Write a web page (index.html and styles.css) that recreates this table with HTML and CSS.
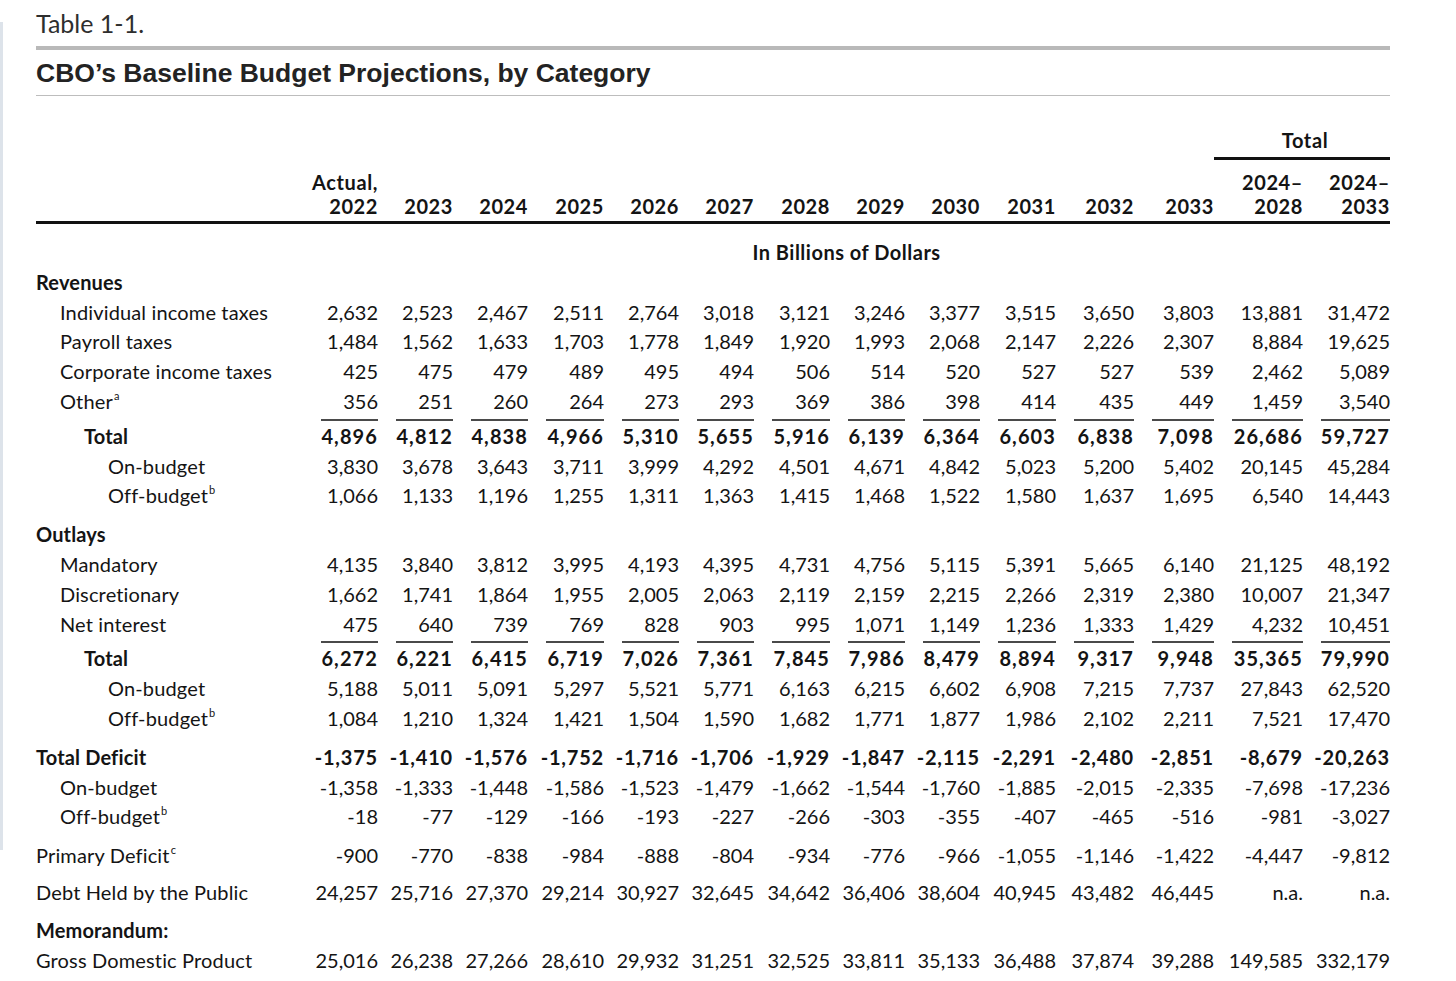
FILE: index.html
```html
<!DOCTYPE html>
<html lang="en">
<head>
<meta charset="utf-8">
<title>CBO's Baseline Budget Projections, by Category</title>
<link rel="stylesheet" href="styles.css">
</head>
<body>
<div class="frame">
  <div class="edge"></div>
  <main class="page">
    <div class="caption">Table 1-1.</div>
    <div class="rule-thick"></div>
    <h1 class="title">CBO’s Baseline Budget Projections, by Category</h1>
    <div class="rule-thin"></div>

    <table class="budget">
      <colgroup>
        <col class="c-label">
        <col class="c-y"><col class="c-y"><col class="c-y"><col class="c-y5"><col class="c-y">
        <col class="c-y"><col class="c-y5"><col class="c-y"><col class="c-y"><col class="c-y5">
        <col class="c-32"><col class="c-33"><col class="c-t1"><col class="c-t2">
      </colgroup>
      <thead>
        <tr class="group">
          <th colspan="13"></th>
          <th colspan="2" class="group-total">Total</th>
        </tr>
        <tr class="years">
          <th></th>
          <th>Actual,<br>2022</th>
          <th>2023</th><th>2024</th><th>2025</th><th>2026</th><th>2027</th><th>2028</th>
          <th>2029</th><th>2030</th><th>2031</th><th>2032</th><th>2033</th>
          <th>2024–<br>2028</th><th>2024–<br>2033</th>
        </tr>
      </thead>
      <tbody>
        <tr class="units"><td></td><td colspan="14">In Billions of Dollars</td></tr>

        <tr class="section"><td colspan="15">Revenues</td></tr>
        <tr><td class="l1">Individual income taxes</td><td>2,632</td><td>2,523</td><td>2,467</td><td>2,511</td><td>2,764</td><td>3,018</td><td>3,121</td><td>3,246</td><td>3,377</td><td>3,515</td><td>3,650</td><td>3,803</td><td>13,881</td><td>31,472</td></tr>
        <tr><td class="l1">Payroll taxes</td><td>1,484</td><td>1,562</td><td>1,633</td><td>1,703</td><td>1,778</td><td>1,849</td><td>1,920</td><td>1,993</td><td>2,068</td><td>2,147</td><td>2,226</td><td>2,307</td><td>8,884</td><td>19,625</td></tr>
        <tr><td class="l1">Corporate income taxes</td><td>425</td><td>475</td><td>479</td><td>489</td><td>495</td><td>494</td><td>506</td><td>514</td><td>520</td><td>527</td><td>527</td><td>539</td><td>2,462</td><td>5,089</td></tr>
        <tr><td class="l1">Other<sup>a</sup></td><td>356</td><td>251</td><td>260</td><td>264</td><td>273</td><td>293</td><td>369</td><td>386</td><td>398</td><td>414</td><td>435</td><td>449</td><td>1,459</td><td>3,540</td></tr>
        <tr class="total"><td class="l2">Total</td><td>4,896</td><td>4,812</td><td>4,838</td><td>4,966</td><td>5,310</td><td>5,655</td><td>5,916</td><td>6,139</td><td>6,364</td><td>6,603</td><td>6,838</td><td>7,098</td><td>26,686</td><td>59,727</td></tr>
        <tr><td class="l3">On-budget</td><td>3,830</td><td>3,678</td><td>3,643</td><td>3,711</td><td>3,999</td><td>4,292</td><td>4,501</td><td>4,671</td><td>4,842</td><td>5,023</td><td>5,200</td><td>5,402</td><td>20,145</td><td>45,284</td></tr>
        <tr><td class="l3">Off-budget<sup>b</sup></td><td>1,066</td><td>1,133</td><td>1,196</td><td>1,255</td><td>1,311</td><td>1,363</td><td>1,415</td><td>1,468</td><td>1,522</td><td>1,580</td><td>1,637</td><td>1,695</td><td>6,540</td><td>14,443</td></tr>

        <tr class="section gap"><td colspan="15">Outlays</td></tr>
        <tr><td class="l1">Mandatory</td><td>4,135</td><td>3,840</td><td>3,812</td><td>3,995</td><td>4,193</td><td>4,395</td><td>4,731</td><td>4,756</td><td>5,115</td><td>5,391</td><td>5,665</td><td>6,140</td><td>21,125</td><td>48,192</td></tr>
        <tr><td class="l1">Discretionary</td><td>1,662</td><td>1,741</td><td>1,864</td><td>1,955</td><td>2,005</td><td>2,063</td><td>2,119</td><td>2,159</td><td>2,215</td><td>2,266</td><td>2,319</td><td>2,380</td><td>10,007</td><td>21,347</td></tr>
        <tr><td class="l1">Net interest</td><td>475</td><td>640</td><td>739</td><td>769</td><td>828</td><td>903</td><td>995</td><td>1,071</td><td>1,149</td><td>1,236</td><td>1,333</td><td>1,429</td><td>4,232</td><td>10,451</td></tr>
        <tr class="total"><td class="l2">Total</td><td>6,272</td><td>6,221</td><td>6,415</td><td>6,719</td><td>7,026</td><td>7,361</td><td>7,845</td><td>7,986</td><td>8,479</td><td>8,894</td><td>9,317</td><td>9,948</td><td>35,365</td><td>79,990</td></tr>
        <tr><td class="l3">On-budget</td><td>5,188</td><td>5,011</td><td>5,091</td><td>5,297</td><td>5,521</td><td>5,771</td><td>6,163</td><td>6,215</td><td>6,602</td><td>6,908</td><td>7,215</td><td>7,737</td><td>27,843</td><td>62,520</td></tr>
        <tr><td class="l3">Off-budget<sup>b</sup></td><td>1,084</td><td>1,210</td><td>1,324</td><td>1,421</td><td>1,504</td><td>1,590</td><td>1,682</td><td>1,771</td><td>1,877</td><td>1,986</td><td>2,102</td><td>2,211</td><td>7,521</td><td>17,470</td></tr>

        <tr class="bold gap"><td>Total Deficit</td><td>-1,375</td><td>-1,410</td><td>-1,576</td><td>-1,752</td><td>-1,716</td><td>-1,706</td><td>-1,929</td><td>-1,847</td><td>-2,115</td><td>-2,291</td><td>-2,480</td><td>-2,851</td><td>-8,679</td><td>-20,263</td></tr>
        <tr><td class="l1">On-budget</td><td>-1,358</td><td>-1,333</td><td>-1,448</td><td>-1,586</td><td>-1,523</td><td>-1,479</td><td>-1,662</td><td>-1,544</td><td>-1,760</td><td>-1,885</td><td>-2,015</td><td>-2,335</td><td>-7,698</td><td>-17,236</td></tr>
        <tr><td class="l1">Off-budget<sup>b</sup></td><td>-18</td><td>-77</td><td>-129</td><td>-166</td><td>-193</td><td>-227</td><td>-266</td><td>-303</td><td>-355</td><td>-407</td><td>-465</td><td>-516</td><td>-981</td><td>-3,027</td></tr>

        <tr class="gap"><td>Primary Deficit<sup>c</sup></td><td>-900</td><td>-770</td><td>-838</td><td>-984</td><td>-888</td><td>-804</td><td>-934</td><td>-776</td><td>-966</td><td>-1,055</td><td>-1,146</td><td>-1,422</td><td>-4,447</td><td>-9,812</td></tr>
        <tr class="gap-d"><td>Debt Held by the Public</td><td>24,257</td><td>25,716</td><td>27,370</td><td>29,214</td><td>30,927</td><td>32,645</td><td>34,642</td><td>36,406</td><td>38,604</td><td>40,945</td><td>43,482</td><td>46,445</td><td>n.a.</td><td>n.a.</td></tr>

        <tr class="section gap-s"><td colspan="15">Memorandum:</td></tr>
        <tr><td>Gross Domestic Product</td><td>25,016</td><td>26,238</td><td>27,266</td><td>28,610</td><td>29,932</td><td>31,251</td><td>32,525</td><td>33,811</td><td>35,133</td><td>36,488</td><td>37,874</td><td>39,288</td><td>149,585</td><td>332,179</td></tr>
      </tbody>
    </table>
  </main>
</div>
</body>
</html>
```

FILE: styles.css
```css
html, body {
  margin: 0;
  padding: 0;
  background: #ffffff;
}

body {
  font-family: Lato, "Noto Sans", "Liberation Sans", sans-serif;
  color: #141414;
}

.frame {
  display: flex;
  align-items: flex-start;
}

.edge {
  width: 3px;
  height: 828px;
  margin-top: 22px;
  background: #dde3ea;
  flex: none;
}

.page {
  margin-left: 33px;
  width: 1354px;
  padding-top: 9px;
}

.caption {
  font-family: Lato, "Noto Sans", sans-serif;
  font-size: 25px;
  line-height: 28px;
  color: #2e2e2e;
}

.rule-thick {
  margin-top: 9px;
  height: 4px;
  background: #b9b9b9;
}

.title {
  margin: 7px 0 0;
  font-family: "Liberation Sans", Arial, sans-serif;
  font-weight: 700;
  font-size: 26.5px;
  line-height: 32px;
  color: #232323;
}

.rule-thin {
  margin-top: 6px;
  height: 1px;
  background: #bdbdbd;
}

.budget {
  margin-top: 32px;
  width: 1354px;
  table-layout: fixed;
  border-collapse: separate;
  border-spacing: 0;
  font-size: 20px;
}

.c-label { width: 267px; }
.c-y { width: 75px; }
.c-y5 { width: 76px; }
.c-32 { width: 78px; }
.c-33 { width: 80px; }
.c-t1 { width: 89px; }
.c-t2 { width: 87px; }

.budget th {
  font-weight: 700;
  text-align: right;
  vertical-align: bottom;
  line-height: 24px;
  padding: 0;
  white-space: nowrap;
  letter-spacing: 0.6px;
}

.group th {
  padding-bottom: 5px;
}

.group .group-total {
  text-align: center;
  border-bottom: 3px solid #111;
  padding-left: 6px;
}

.years th {
  padding-top: 10px;
  padding-bottom: 3px;
  border-bottom: 3px solid #111;
}

.budget td {
  padding: 0;
  line-height: 29.8px;
  text-align: right;
  white-space: nowrap;
}

.budget td:first-child {
  text-align: left;
  letter-spacing: 0.15px;
}

.units td {
  padding-top: 14px;
  font-weight: 700;
  letter-spacing: 0.5px;
  text-align: center !important;
}

.section td {
  font-weight: 700;
}

.bold td {
  font-weight: 700;
}

.bold td + td {
  letter-spacing: 0.8px;
}

.l1 { padding-left: 24px !important; }
.l2 { padding-left: 48px !important; }
.l3 { padding-left: 72px !important; }

.total td {
  font-weight: 700;
  padding-top: 5px;
}

.total td + td {
  letter-spacing: 1.1px;
  background-image: linear-gradient(#4a4a4a, #4a4a4a);
  background-repeat: no-repeat;
  background-position: right 0 top 2px;
  background-size: calc(100% - 18px) 2px;
}

.gap td {
  padding-top: 9px;
}

.gap-d td {
  padding-top: 7px;
}

.gap-s td {
  padding-top: 8px;
}

sup {
  font-size: 11px;
  line-height: 0;
  vertical-align: 9px;
  margin-left: 1px;
}
```
